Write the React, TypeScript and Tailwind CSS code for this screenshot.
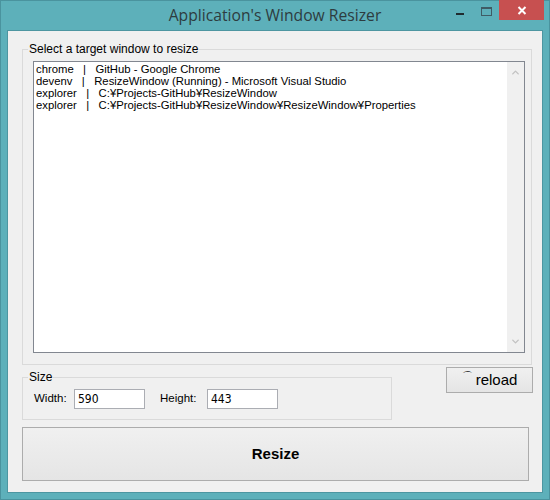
import React from "react";
import { ChevronUp, ChevronDown } from "lucide-react";

const rows = [
  "chrome   |   GitHub - Google Chrome",
  "devenv   |   ResizeWindow (Running) - Microsoft Visual Studio",
  "explorer   |   C:¥Projects-GitHub¥ResizeWindow",
  "explorer   |   C:¥Projects-GitHub¥ResizeWindow¥ResizeWindow¥Properties",
];

export default function App() {
  return (
    <div className="w-[550px] h-[500px] bg-[#5db0ba] border border-[#4a939e] flex flex-col px-[6px] pb-[6px] font-['Liberation_Sans',Arial,sans-serif] text-[12px] text-black">
      {/* Title bar */}
      <div className="relative h-[29px] flex items-center justify-center">
        <span className="font-['Open_Sans',sans-serif] text-[15.7px] text-[#2d3c40] pt-[1px]">Application's Window Resizer</span>
        <div className="absolute right-[-1px] top-[-1px] flex items-start">
          <div className="w-[26px] h-[20px] flex items-center justify-center">
            <div className="w-[8px] h-[2px] bg-[#1f2b2f] mt-[8px]" />
          </div>
          <div className="w-[26px] h-[20px] flex items-center justify-center">
            <div className="w-[11px] h-[9px] border border-t-2 border-[#3f5c65] mt-[2px]" />
          </div>
          <div className="w-[45px] h-[20px] bg-[#c75050] flex items-center justify-center">
            <svg width="10" height="9" viewBox="0 0 10 9">
              <path d="M1.5 1 L8.5 8 M8.5 1 L1.5 8" stroke="#fff" strokeWidth="2" />
            </svg>
          </div>
        </div>
      </div>

      {/* Client area */}
      <div className="flex-1 bg-[#f0f0f0] border border-[#4d96a1] flex flex-col px-[14px]">
        <fieldset className="mt-[11px] border border-[#dadada] pl-[10px] pr-[6px] pb-[11px] w-[510px]">
          <legend className="ml-[-5px] px-[1px] leading-[14px]">Select a target window to resize</legend>
          <div className="mt-[5px] h-[292px] border border-[#828790] bg-white flex">
            <div className="flex-1 pl-[2px] pt-[1px] text-[11.3px]">
              {rows.map((r, i) => (
                <div key={i} className="whitespace-pre leading-[12px]">{r}</div>
              ))}
            </div>
            <div className="w-[17px] bg-[#f0f0f0] flex flex-col justify-between items-center py-[5px]">
              <ChevronUp size={11} strokeWidth={3} className="text-[#c2c2c2]" />
              <ChevronDown size={11} strokeWidth={3} className="text-[#c2c2c2]" />
            </div>
          </div>
        </fieldset>

        <div className="mt-[2px] flex items-start justify-between mr-[-5px]">
          <fieldset className="mt-[3px] w-[370px] border border-[#dadada] pl-[11px] pb-[10px]">
            <legend className="ml-[-6px] px-[1px] leading-[14px]">Size</legend>
            <div className="mt-[5px] flex items-center text-[11.5px]">
              <span className="w-[40px]">Width:</span>
              <div className="w-[71px] h-[20px] border border-[#abadb3] bg-white flex items-center px-[3px] font-['DejaVu_Sans_Condensed',sans-serif] text-[12px]">590</div>
              <span className="ml-[15px] w-[47px]">Height:</span>
              <div className="w-[71px] h-[20px] border border-[#abadb3] bg-white flex items-center px-[3px] font-['DejaVu_Sans_Condensed',sans-serif] text-[12px]">443</div>
            </div>
          </fieldset>
          <button className="w-[87px] h-[26px] border border-[#acacac] bg-gradient-to-b from-[#f0f0f0] to-[#e5e5e5] text-[15px] flex items-center justify-center">
            <span className="text-[11px] mr-[3px] -mt-[8px]">⌒</span>reload
          </button>
        </div>

        <button className="mt-[7px] w-[507px] h-[54px] border border-[#acacac] bg-gradient-to-b from-[#f0f0f0] to-[#e5e5e5] text-[15px] font-bold flex items-center justify-center">
          Resize
        </button>
      </div>
    </div>
  );
}
